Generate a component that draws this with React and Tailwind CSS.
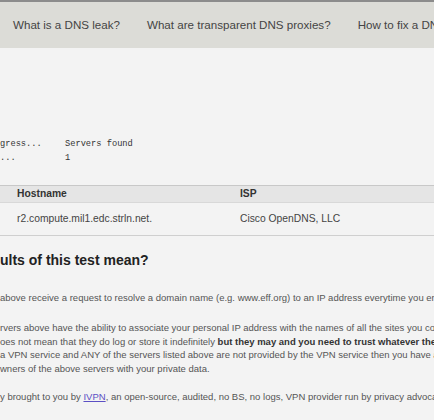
export default function App() {
  return (
    <div className="w-[434px] h-[420px] overflow-hidden bg-[#f3f3f3] font-['Liberation_Sans',Arial,sans-serif] whitespace-nowrap">
      {/* Top nav */}
      <div className="border-t-2 border-[#8c8c8c] bg-[#dcdcd7] h-[48px] flex items-center gap-[27px] pl-[13px] text-[11.6px] text-[#444]">
        <span>What is a DNS leak?</span>
        <span>What are transparent DNS proxies?</span>
        <span>How to fix a DNS leak</span>
      </div>

      {/* Progress */}
      <div className="mt-[89px] flex font-['Liberation_Mono',monospace] text-[8.7px] leading-[14px] text-[#333]">
        <div className="w-[65px]">
          <div>gress...</div>
          <div>...</div>
        </div>
        <div>
          <div>Servers found</div>
          <div>1</div>
        </div>
      </div>

      {/* Results table */}
      <div className="mt-[20px] border-t border-[#c8c8c8] text-[10.3px]">
        <div className="flex h-[17px] items-center bg-[#e5e5e5] border-b border-[#d8d8d8] font-bold text-[#333]">
          <div className="w-[240px] pl-[17px]">Hostname</div>
          <div>ISP</div>
        </div>
        <div className="flex h-[33px] items-center border-b border-[#cfcfcf] text-[#444]">
          <div className="w-[240px] pl-[17px]">r2.compute.mil1.edc.strln.net.</div>
          <div>Cisco OpenDNS, LLC</div>
        </div>
      </div>

      {/* Explanation */}
      <h2 className="mt-[15px] text-[14px] font-bold text-[#222] leading-[18px]">ults of this test mean?</h2>
      <p className="mt-[22px] text-[9.5px] text-[#555] leading-[13px]">
        above receive a request to resolve a domain name (e.g. www.eff.org) to an IP address everytime you enter a website address
      </p>
      <div className="mt-[17px] text-[9.5px] text-[#555] leading-[13.5px]">
        <div>rvers above have the ability to associate your personal IP address with the names of all the sites you connect to</div>
        <div>
          oes not mean that they do log or store it indefinitely{" "}
          <b className="text-[#333]">but they may and you need to trust whatever they do</b>
        </div>
        <div>a VPN service and ANY of the servers listed above are not provided by the VPN service then you have a DNS leak</div>
        <div>wners of the above servers with your private data.</div>
      </div>
      <p className="mt-[15px] text-[9.5px] text-[#555] leading-[13px]">
        y brought to you by <a className="text-[#5b4fc4] underline">IVPN</a>, an open-source, audited, no BS, no logs, VPN provider run by privacy advocates
      </p>
    </div>
  );
}
